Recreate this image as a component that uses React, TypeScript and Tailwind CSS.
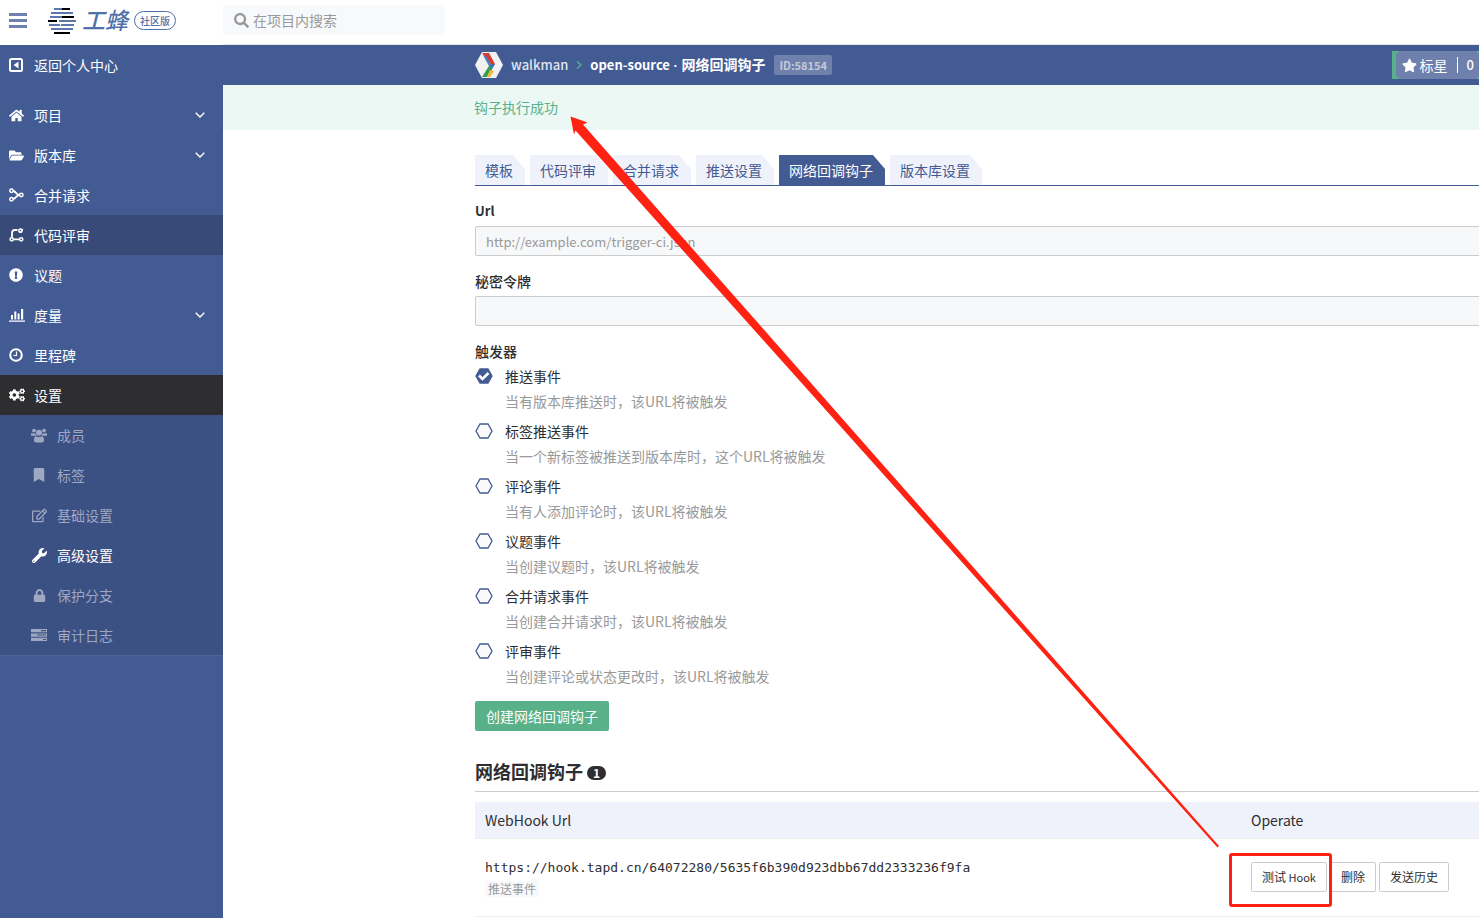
import { useState } from 'react';
import type { ReactNode } from 'react';
import {
  FaBookmark,
  FaCogs,
  FaExclamationCircle,
  FaFolderOpen,
  FaHome,
  FaLock,
  FaRegEdit,
  FaSearch,
  FaStar,
  FaWrench,
} from 'react-icons/fa';

type NavItem = {
  label: string;
  icon: ReactNode;
  expandable?: boolean;
  state?: 'hover' | 'current';
};

function BackIcon() {
  return (
    <svg width="14" height="14" viewBox="0 0 14 14" fill="none">
      <rect x="1" y="1" width="12" height="12" rx="1.5" stroke="currentColor" strokeWidth="2" />
      <path d="M9.5 3.5v7L4.5 7z" fill="currentColor" />
    </svg>
  );
}

function MergeIcon() {
  return (
    <svg width="15" height="14" viewBox="0 0 15 14" fill="none" stroke="currentColor" strokeWidth="1.5">
      <circle cx="2.5" cy="2.8" r="1.7" />
      <circle cx="2.5" cy="11.2" r="1.7" />
      <circle cx="12.3" cy="7" r="1.7" />
      <path d="M4.2 3C7 3.2 7 6.8 10.4 7M4.2 11C7 10.8 7 7.2 10.4 7" strokeWidth="1.8" />
    </svg>
  );
}

function ReviewIcon() {
  return (
    <svg width="15" height="14" viewBox="0 0 15 14" fill="none" stroke="currentColor" strokeWidth="1.5">
      <path d="M8.5 2H6Q3 2 3 5v4.5M4.5 11.4h6.2" strokeWidth="1.8" />
      <circle cx="2.7" cy="11.3" r="1.6" />
      <circle cx="12.2" cy="11.3" r="1.6" />
      <circle cx="11.5" cy="2.8" r="1.7" />
      <path d="M9.8 2.8l1.5 1.5L14 1" strokeWidth="1.1" />
    </svg>
  );
}

function ChartIcon() {
  return (
    <svg width="16" height="14" viewBox="0 0 16 14" fill="currentColor">
      <path d="M0 12.5h16v1.2H0zM2 7h2v4.5H2zM5.300 3.500h2v8h-2zM8.600 5.500h2v6h-2zM12 1h2.200v10.500H12z" />
    </svg>
  );
}

function ClockIcon() {
  return (
    <svg width="14" height="14" viewBox="0 0 14 14" fill="none" stroke="currentColor">
      <circle cx="7" cy="7" r="5.800" strokeWidth="2" />
      <path d="M7.500 3.500v4H4.500" strokeWidth="1.200" />
    </svg>
  );
}

function MembersIcon() {
  return (
    <svg width="16" height="15" viewBox="0 0 16 15" fill="currentColor">
      <circle cx="3" cy="2.600" r="1.900" />
      <circle cx="13" cy="2.600" r="1.900" />
      <circle cx="8" cy="4.800" r="3" />
      <path d="M0 7.800V6.500Q0 4.800 1 5q2 1 3.500.2.200 1.800.9 2.600zM16 7.800V6.500Q16 4.800 15 5q-2 1-3.500.2-.2 1.800-.9 2.600z" />
      <path d="M3 12.500q0-4.300 2.200-4.300 2.800 1.800 5.600 0 2.200 0 2.200 4.300 0 1.900-2 1.900H5q-2 0-2-1.900z" />
    </svg>
  );
}

function TasksIcon() {
  return (
    <svg width="16" height="14" viewBox="0 0 16 14" fill="currentColor">
      <path
        fillRule="evenodd"
        d="M0 1h16v3.300H0zM10 2.100v1.100h5V2.100zM0 5.400h16v3.300H0zM6 6.500v1.100h9V6.500zM0 9.800h16v3.300H0zM12 10.900V12h3v-1.100z"
      />
    </svg>
  );
}

function ChevronDown() {
  return (
    <svg width="10" height="6" viewBox="0 0 10 6" fill="none" stroke="currentColor" strokeWidth="1.400">
      <path d="M.7.7L5 5 9.300.7" />
    </svg>
  );
}

function BeeMark() {
  return (
    <svg className="shrink-0" width="28" height="26" viewBox="0 0 28 26" strokeWidth="2" fill="none">
      <path stroke="#5b78aa" d="M6 1h8M3 5h22M2 9h12M11 13h17M1 17h11M13 17h13M3 21h22" />
      <path stroke="#000" d="M14 1h8M14 9h12M0 13h9M6 25h16" />
    </svg>
  );
}

function ProjectAvatar() {
  return (
    <svg width="30" height="28" viewBox="0 0 30 28">
      <path d="M8 1h14l7 13-7 13H8L1 14z" fill="#f1f1f1" />
      <path d="M8 2h7l6 11-2 3z" fill="#d93b34" />
      <path d="M9 4l3 1 6 10-2 2z" fill="#4a7fc1" />
      <path d="M17 13h4l-4 7h-4z" fill="#3f6fb5" />
      <path d="M15 15l3 1-5 10H8z" fill="#2f9e54" />
      <path d="M16 19l4 1-4 6h-3z" fill="#f0b929" />
    </svg>
  );
}

const navItems: NavItem[] = [
  { label: '项目', icon: <FaHome size={15} />, expandable: true },
  { label: '版本库', icon: <FaFolderOpen size={15} />, expandable: true },
  { label: '合并请求', icon: <MergeIcon /> },
  { label: '代码评审', icon: <ReviewIcon />, state: 'hover' },
  { label: '议题', icon: <FaExclamationCircle size={14} /> },
  { label: '度量', icon: <ChartIcon />, expandable: true },
  { label: '里程碑', icon: <ClockIcon /> },
  { label: '设置', icon: <FaCogs size={16} />, state: 'current' },
];

const settingItems = [
  { label: '成员', icon: <MembersIcon /> },
  { label: '标签', icon: <FaBookmark size={14} /> },
  { label: '基础设置', icon: <FaRegEdit size={15} /> },
  { label: '高级设置', icon: <FaWrench size={15} />, active: true },
  { label: '保护分支', icon: <FaLock size={13} /> },
  { label: '审计日志', icon: <TasksIcon /> },
];

const tabs = ['模板', '代码评审', '合并请求', '推送设置', '网络回调钩子', '版本库设置'];

const triggers = [
  { id: 'push', label: '推送事件', help: '当有版本库推送时，该URL将被触发' },
  { id: 'tag', label: '标签推送事件', help: '当一个新标签被推送到版本库时，这个URL将被触发' },
  { id: 'note', label: '评论事件', help: '当有人添加评论时，该URL将被触发' },
  { id: 'issue', label: '议题事件', help: '当创建议题时，该URL将被触发' },
  { id: 'merge', label: '合并请求事件', help: '当创建合并请求时，该URL将被触发' },
  { id: 'review', label: '评审事件', help: '当创建评论或状态更改时，该URL将被触发' },
];

const navBackground = {
  hover: 'bg-[#384a78]',
  current: 'bg-[#2e2e30]',
};

const rowButton = 'h-[30px] rounded-xs border border-[#ccc] bg-white px-[10px]';

function TopBar() {
  return (
    <header className="flex h-[45px] bg-white">
      <div className="flex w-[223px] shrink-0 items-center pb-1 pl-[9px]">
        <button type="button" aria-label="菜单" className="flex w-[18px] flex-col gap-[3px]">
          <span className="h-[3px] bg-[#6e80ae]" />
          <span className="h-[3px] bg-[#6e80ae]" />
          <span className="h-[3px] bg-[#6e80ae]" />
        </button>
        <a href="#" className="ml-[21px] flex items-center text-[#4f70a8]">
          <BeeMark />
          <span className="ml-[6px] pb-1 text-[23px] leading-6 font-medium italic">工蜂</span>
          <span className="ml-[6px] rounded-full border border-[#4f70a8] px-[5px] text-[10px] leading-[17px] font-medium">
            社区版
          </span>
        </a>
      </div>
      <div className="flex-1 border-b border-[#e7e7e7] pt-[5px]">
        <label className="flex h-[30px] w-[222px] items-center gap-1 bg-[#f8f9fb] pl-[11px] text-[#999]">
          <FaSearch size={15} className="shrink-0" />
          <input
            type="search"
            aria-label="在项目内搜索"
            placeholder="在项目内搜索"
            className="w-full min-w-0 bg-transparent outline-none placeholder:text-[#999]"
          />
        </label>
      </div>
    </header>
  );
}

function Sidebar() {
  return (
    <nav className="w-[223px] shrink-0 bg-[#435b93] text-white">
      <a href="#" className="mb-[10px] flex h-10 items-center pl-[9px]">
        <span className="flex w-[25px]">
          <BackIcon />
        </span>
        返回个人中心
      </a>
      {navItems.map((item) => (
        <a
          key={item.label}
          href="#"
          className={`flex h-10 items-center pr-[18px] pl-[9px] ${item.state ? navBackground[item.state] : ''}`}
        >
          <span className="flex w-[25px]">{item.icon}</span>
          <span className="flex-1">{item.label}</span>
          {item.expandable && <ChevronDown />}
        </a>
      ))}
      <div className="border-b border-[#4d649a] bg-[#3b5083]">
        {settingItems.map((item) => (
          <a
            key={item.label}
            href="#"
            className={`flex h-10 items-center pl-[30px] ${item.active ? 'text-white' : 'text-[#9ea8c2]'}`}
          >
            <span className="mr-[9px] flex w-[18px] justify-center">{item.icon}</span>
            {item.label}
          </a>
        ))}
      </div>
    </nav>
  );
}

function ProjectHeader() {
  return (
    <div className="flex h-10 items-center bg-[#435b93] pl-[251px] whitespace-nowrap text-white">
      <ProjectAvatar />
      <a href="#" className="ml-[7px] text-[13px] font-medium text-[#dfe5f1]">
        walkman
      </a>
      <svg className="mx-2" width="6" height="8" viewBox="0 0 6 8" fill="none" stroke="#58b189" strokeWidth="1.300">
        <path d="M1 .5L5 4 1 7.500" />
      </svg>
      <h1 className="font-bold">
        <span className="text-[13px]">open-source</span>
        <span className="font-['Liberation_Sans',sans-serif] text-[13px]"> · </span>
        网络回调钩子
      </h1>
      <span className="ml-[9px] rounded-xs bg-[#6f80ad] px-[5px] text-[11px] leading-5 font-bold text-[#c4c9d5]">
        ID:58154
      </span>
      <button
        type="button"
        className="relative ml-auto flex h-7 items-center border-l-4 border-[#58b189] bg-[#6f80ad] pr-[5px] pl-[6px] before:absolute before:inset-y-0 before:left-0 before:w-[3px] before:border-y-2 before:border-[#58b189] after:absolute after:inset-y-0 after:right-0 after:w-[2px] after:border-y-2 after:border-[#58b189]"
      >
        <FaStar size={15} />
        <span className="ml-[3px]">标星</span>
        <span className="ml-[9px] border-l border-white pl-[9px] text-[13px] leading-4 font-medium">0</span>
      </button>
    </div>
  );
}

function HexCheckbox({ id, checked, onChange }: { id: string; checked: boolean; onChange: () => void }) {
  return (
    <span className="relative flex h-5 w-[18px] items-center">
      <input
        id={id}
        type="checkbox"
        checked={checked}
        onChange={onChange}
        className="absolute inset-0 cursor-pointer appearance-none"
      />
      <svg className="pointer-events-none" width="18" height="16" viewBox="0 0 18 16">
        <path
          d="M5 1h8l4 7-4 7H5L1 8z"
          fill={checked ? '#435b93' : '#fafafa'}
          stroke="#435b93"
          strokeWidth="1.300"
        />
        {checked && <path d="M4 7.500l3.500 3.500 6-6" fill="none" stroke="#fff" strokeWidth="2.600" />}
      </svg>
    </span>
  );
}

function HookForm() {
  const [selected, setSelected] = useState<string[]>(['push']);

  function toggle(id: string) {
    setSelected((prev) => (prev.includes(id) ? prev.filter((value) => value !== id) : [...prev, id]));
  }

  return (
    <form className="pt-[15px]" onSubmit={(event) => event.preventDefault()}>
      <label htmlFor="hook-url" className="block text-[13px] font-bold">
        Url
      </label>
      <input
        id="hook-url"
        type="text"
        placeholder="http://example.com/trigger-ci.json"
        className="mt-[5px] block h-[30px] w-full rounded-xs border border-[#ccc] bg-[#f7f8fa] px-[10px] text-[13px] outline-none placeholder:text-[#999]"
      />
      <label htmlFor="hook-token" className="mt-[15px] block font-medium">
        秘密令牌
      </label>
      <input
        id="hook-token"
        type="text"
        className="mt-[5px] block h-[30px] w-full rounded-xs border border-[#ccc] bg-[#f7f8fa] px-[10px] text-[13px] outline-none"
      />
      <fieldset className="mt-[15px] flex flex-col gap-[10px]">
        <legend className="mb-[5px] font-medium">触发器</legend>
        {triggers.map((trigger) => (
          <div key={trigger.id} className="flex gap-3">
            <HexCheckbox
              id={trigger.id}
              checked={selected.includes(trigger.id)}
              onChange={() => toggle(trigger.id)}
            />
            <div>
              <label htmlFor={trigger.id}>{trigger.label}</label>
              <p className="mt-[5px] text-[#999]">{trigger.help}</p>
            </div>
          </div>
        ))}
      </fieldset>
      <button type="submit" className="mt-[15px] h-[30px] rounded-xs bg-[#58b189] px-[11px] text-white">
        创建网络回调钩子
      </button>
    </form>
  );
}

function HookTable() {
  return (
    <section className="mt-[25px]">
      <h2 className="flex h-9 items-center gap-1 border-b border-[#ccc] pb-[5px] text-[18px] font-bold">
        网络回调钩子
        <span className="mt-[3px] rounded-full bg-[#2e2e30] px-[6px] text-[12px] leading-[14px] text-white">1</span>
      </h2>
      <table className="mt-[10px] w-full table-fixed text-left">
        <thead>
          <tr className="h-9 border-b border-[#eee] bg-[#eff2fb]">
            <th className="px-[10px] font-normal">WebHook Url</th>
            <th className="w-[242px] px-[10px] font-normal">Operate</th>
          </tr>
        </thead>
        <tbody>
          <tr className="h-[78px] border-b border-[#eee]">
            <td className="px-[10px]">
              <div className="font-['DejaVu_Sans_Mono',monospace] text-[13px]">
                https://hook.tapd.cn/64072280/5635f6b390d923dbb67dd2333236f9fa
              </div>
              <span className="mt-[3px] block w-fit rounded-xs bg-[#f8f9fb] px-[3px] text-[12px] leading-4 text-[#999]">
                推送事件
              </span>
            </td>
            <td className="px-[10px]">
              <div className="flex gap-[3px] text-[12px] whitespace-nowrap">
                <button type="button" className={rowButton}>
                  测试<span className="text-[11px]"> Hook</span>
                </button>
                <button type="button" className={rowButton}>
                  删除
                </button>
                <button type="button" className={rowButton}>
                  发送历史
                </button>
              </div>
            </td>
          </tr>
        </tbody>
      </table>
    </section>
  );
}

function Annotation() {
  return (
    <svg
      className="pointer-events-none absolute top-0 left-0"
      width="1479"
      height="918"
      viewBox="0 0 1479 918"
      aria-hidden="true"
    >
      <path d="M570.500 116.500L587.500 122.500L583 124.500L1219 846L1217.500 847.500L575.500 130.500L574 134.500Z" fill="#ff2112" />
      <rect x="1230.500" y="854.500" width="100" height="51" rx="1.500" fill="none" stroke="#ff2112" strokeWidth="3" />
    </svg>
  );
}

export default function App() {
  const [activeTab, setActiveTab] = useState('网络回调钩子');

  return (
    <div className="relative flex h-screen flex-col overflow-hidden bg-white font-['Noto_Sans_CJK_SC',sans-serif] text-[14px] leading-5 text-[#2e2e30]">
      <TopBar />
      <div className="flex min-h-0 flex-1">
        <Sidebar />
        <main className="min-w-0 flex-1 overflow-hidden">
          <ProjectHeader />
          <div role="status" className="h-[45px] bg-[#ecf8f4] pl-[251px] leading-[44px] text-[#58b189]">
            钩子执行成功
          </div>
          <div className="-mr-1 pt-[25px] pl-[252px]">
            <div role="tablist" className="flex gap-[5px] border-b border-[#435b93]">
              {tabs.map((tab) => (
                <button
                  key={tab}
                  type="button"
                  role="tab"
                  aria-selected={tab === activeTab}
                  onClick={() => setActiveTab(tab)}
                  className={`h-[30px] pr-3 pb-px pl-[10px] [clip-path:polygon(0_0,calc(100%_-_12px)_0,100%_14px,100%_100%,0_100%)] ${
                    tab === activeTab ? 'bg-[#435b93] text-white' : 'bg-[#eff2fb] text-[#435b93]'
                  }`}
                >
                  {tab}
                </button>
              ))}
            </div>
            <HookForm />
            <HookTable />
          </div>
        </main>
      </div>
      <Annotation />
    </div>
  );
}
